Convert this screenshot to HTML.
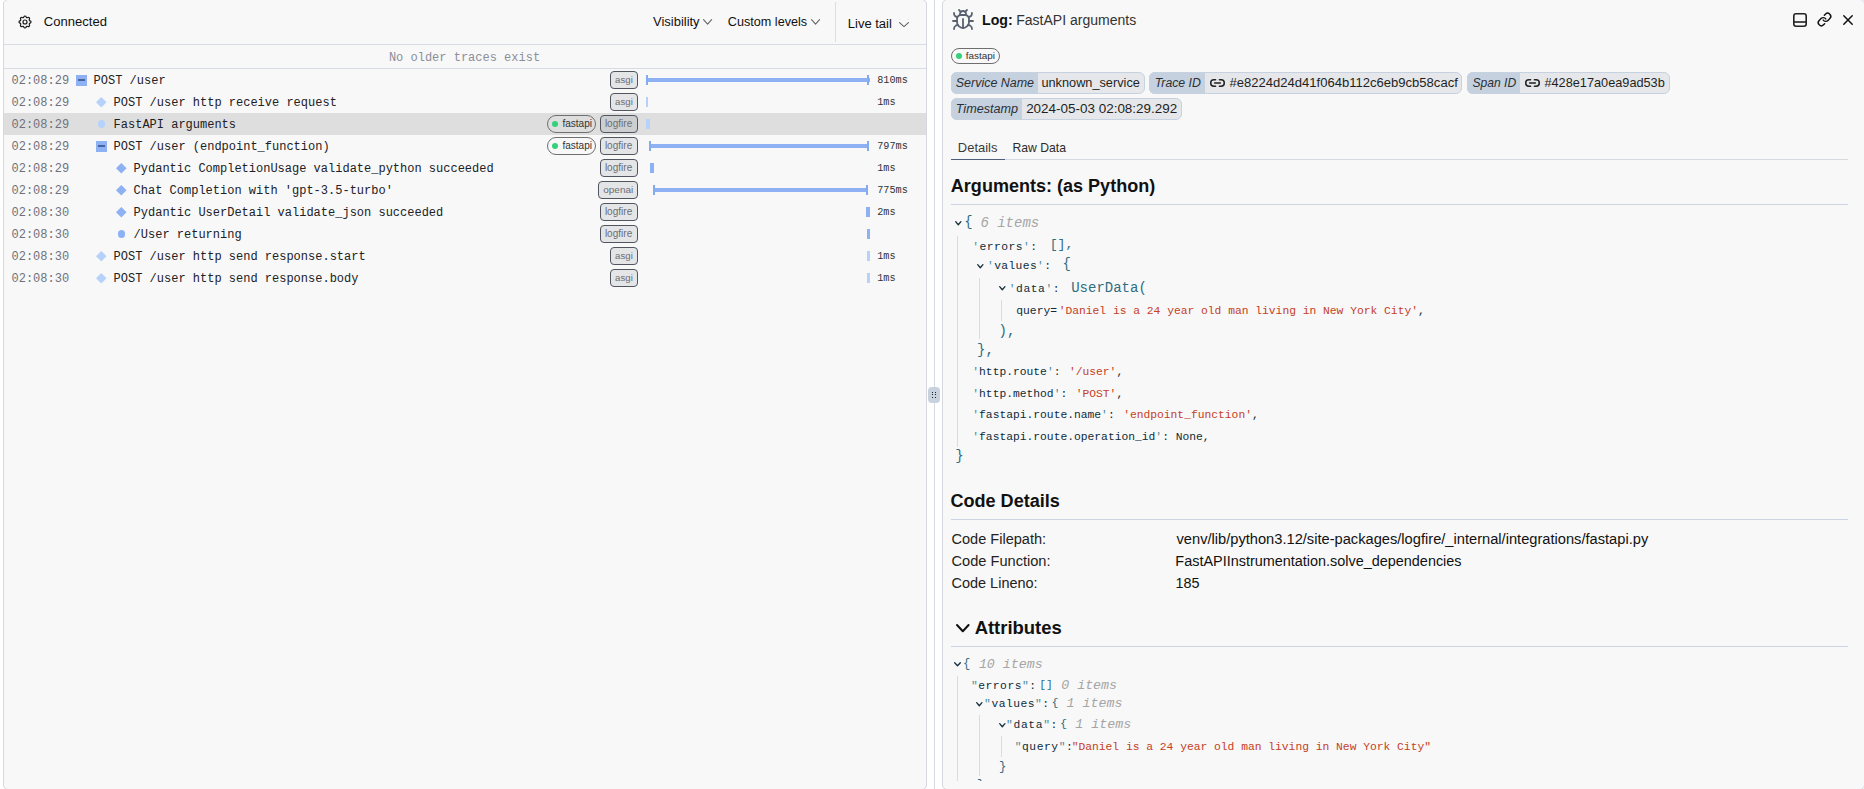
<!DOCTYPE html>
<html><head><meta charset="utf-8"><title>Logfire</title>
<style>
html,body{margin:0;padding:0;width:1864px;height:789px;overflow:hidden;background:#ffffff;}
.t{position:absolute;white-space:pre;}
.b{position:absolute;box-sizing:border-box;}
svg.b{overflow:visible;}
</style></head><body>
<div class="b" style="left:3px;top:-1px;width:924px;height:791px;background:#f8f8f8;border:1px solid #d5d8df;border-radius:5px"></div>
<div class="b" style="left:942px;top:-1px;width:923px;height:791px;background:#f8f8f8;border:1px solid #d5d8df;border-radius:5px"></div>
<div class="b" style="left:934px;top:0px;width:1px;height:789px;background:#d6d9e0"></div>
<div class="b" style="left:928px;top:387px;width:12px;height:16px;background:#c7d2de;border-radius:4px"></div>
<div class="b" style="left:932.3px;top:391.6px;width:1.1px;height:1.1px;background:#222"></div>
<div class="b" style="left:932.3px;top:394.4px;width:1.1px;height:1.1px;background:#222"></div>
<div class="b" style="left:932.3px;top:397.2px;width:1.1px;height:1.1px;background:#222"></div>
<div class="b" style="left:935.2px;top:391.6px;width:1.1px;height:1.1px;background:#222"></div>
<div class="b" style="left:935.2px;top:394.4px;width:1.1px;height:1.1px;background:#222"></div>
<div class="b" style="left:935.2px;top:397.2px;width:1.1px;height:1.1px;background:#222"></div>
<svg class="b" style="left:16.5px;top:14.4px;stroke:#1a1a1a;stroke-width:1.8;stroke-linecap:round;stroke-linejoin:round" width="16" height="16" viewBox="0 0 24 24" fill="none"><path d="M10.325 4.317c.426-1.756 2.924-1.756 3.35 0a1.724 1.724 0 002.573 1.066c1.543-.94 3.31.826 2.37 2.37a1.724 1.724 0 001.065 2.572c1.756.426 1.756 2.924 0 3.35a1.724 1.724 0 00-1.066 2.573c.94 1.543-.826 3.31-2.37 2.37a1.724 1.724 0 00-2.572 1.065c-.426 1.756-2.924 1.756-3.35 0a1.724 1.724 0 00-2.573-1.066c-1.543.94-3.310-.826-2.370-2.370a1.724 1.724 0 00-1.065-2.572c-1.756-.426-1.756-2.924 0-3.350a1.724 1.724 0 001.066-2.573c-.94-1.543.826-3.310 2.370-2.370.996.608 2.296.07 2.572-1.065z"/><path d="M15 12a3 3 0 11-6 0 3 3 0 016 0z"/></svg>
<div class="t" style="left:43.85px;top:15.00px;font:normal normal 13.06px/13.06px 'Liberation Sans',sans-serif;color:#111;">Connected</div>
<div class="t" style="left:653.00px;top:16.00px;font:normal normal 12.97px/12.97px 'Liberation Sans',sans-serif;color:#111;">Visibility</div>
<svg class="b" style="left:703.4px;top:19.1px;" width="9.2" height="5.6" viewBox="0 0 9.2 5.6" fill="none"><polyline points="0.55,0.55 4.60,5.05 8.65,0.55" stroke="#666" stroke-width="1.1" stroke-linecap="round" stroke-linejoin="round"/></svg>
<div class="t" style="left:727.87px;top:16.00px;font:normal normal 12.63px/12.63px 'Liberation Sans',sans-serif;color:#111;">Custom levels</div>
<svg class="b" style="left:810.7px;top:19.1px;" width="9.1" height="5.6" viewBox="0 0 9.1 5.6" fill="none"><polyline points="0.55,0.55 4.55,5.05 8.55,0.55" stroke="#666" stroke-width="1.1" stroke-linecap="round" stroke-linejoin="round"/></svg>
<div class="b" style="left:835px;top:2px;width:1px;height:40px;background:#dcdee5"></div>
<div class="t" style="left:847.76px;top:17.00px;font:normal normal 13.02px/13.02px 'Liberation Sans',sans-serif;color:#111;">Live tail</div>
<svg class="b" style="left:899px;top:22.1px;" width="10" height="5.1" viewBox="0 0 10 5.1" fill="none"><polyline points="0.55,0.55 5.00,4.55 9.45,0.55" stroke="#666" stroke-width="1.1" stroke-linecap="round" stroke-linejoin="round"/></svg>
<div class="b" style="left:4px;top:44px;width:922px;height:1px;background:#d7dce3"></div>
<div class="t" style="left:388.90px;top:52.00px;font:normal 12px/12px 'Liberation Mono',monospace;color:#8b8e9b;">No older traces exist</div>
<div class="b" style="left:4px;top:68px;width:922px;height:1px;background:#d7dce3"></div>
<div class="t" style="left:11.50px;top:75.00px;font:normal 12px/12px 'Liberation Mono',monospace;color:#6f727c;">02:08:29</div>
<div class="b" style="left:75.75px;top:74.5px;width:11.5px;height:11px;background:#8db1f3"></div>
<div class="b" style="left:78.2px;top:79px;width:6.6px;height:2px;background:#46649e"></div>
<div class="t" style="left:93.60px;top:75.00px;font:normal 12px/12px 'Liberation Mono',monospace;color:#202124;">POST /user</div>
<div class="b" style="left:609.8px;top:71.2px;width:28px;height:17.6px;background:rgba(60,70,90,0.1);border:1px solid #50555e;border-radius:4px"></div>
<div class="t" style="left:615.11px;top:75.00px;font:normal normal 9.64px/9.64px 'Liberation Sans',sans-serif;color:#6b6e76;">asgi</div>
<div class="b" style="left:646px;top:78px;width:224px;height:4px;background:#8db1f3"></div>
<div class="b" style="left:646px;top:75px;width:2px;height:10px;background:#84aaf0"></div>
<div class="b" style="left:867px;top:75px;width:2px;height:10px;background:#84aaf0"></div>
<div class="t" style="left:877.20px;top:76.00px;font:normal 10.2px/10.2px 'Liberation Mono',monospace;color:#333;">810ms</div>
<div class="t" style="left:11.50px;top:97.00px;font:normal 12px/12px 'Liberation Mono',monospace;color:#6f727c;">02:08:29</div>
<svg class="b" style="left:96.2px;top:96.7px;" width="10.6" height="10.6" viewBox="0 0 10.6 10.6" fill="none"><polygon points="5.3,0 10.6,5.3 5.3,10.6 0,5.3" fill="#b6d2fb"/></svg>
<div class="t" style="left:113.60px;top:97.00px;font:normal 12px/12px 'Liberation Mono',monospace;color:#202124;">POST /user http receive request</div>
<div class="b" style="left:609.8px;top:93.2px;width:28px;height:17.6px;background:rgba(60,70,90,0.1);border:1px solid #50555e;border-radius:4px"></div>
<div class="t" style="left:615.11px;top:97.00px;font:normal normal 9.64px/9.64px 'Liberation Sans',sans-serif;color:#6b6e76;">asgi</div>
<div class="b" style="left:646px;top:97px;width:2px;height:10px;background:#b6d2fb"></div>
<div class="t" style="left:877.20px;top:98.00px;font:normal 10.2px/10.2px 'Liberation Mono',monospace;color:#333;">1ms</div>
<div class="b" style="left:4px;top:113px;width:922px;height:22px;background:#dedede"></div>
<div class="t" style="left:11.50px;top:119.00px;font:normal 12px/12px 'Liberation Mono',monospace;color:#6f727c;">02:08:29</div>
<div class="b" style="left:97.7px;top:120.2px;width:7.6px;height:7.6px;background:#b6d2fb;border-radius:50%"></div>
<div class="t" style="left:113.60px;top:119.00px;font:normal 12px/12px 'Liberation Mono',monospace;color:#202124;">FastAPI arguments</div>
<div class="b" style="left:600.0999999999999px;top:115.2px;width:37.7px;height:17.6px;background:rgba(60,70,90,0.1);border:1px solid #50555e;border-radius:4px"></div>
<div class="t" style="left:604.90px;top:119.00px;font:normal normal 10.05px/10.05px 'Liberation Sans',sans-serif;color:#6b6e76;">logfire</div>
<div class="b" style="left:547.2999999999998px;top:115.1px;width:48.6px;height:17.5px;border:1px solid #6f6f6f;border-radius:9px"></div>
<div class="b" style="left:552.0999999999998px;top:120.8px;width:6.3px;height:6.3px;background:#33d17a;border-radius:50%"></div>
<div class="t" style="left:562.40px;top:119.00px;font:normal normal 10.06px/10.06px 'Liberation Sans',sans-serif;color:#333;">fastapi</div>
<div class="b" style="left:646px;top:119px;width:4px;height:10px;background:#b6d2fb"></div>
<div class="t" style="left:11.50px;top:141.00px;font:normal 12px/12px 'Liberation Mono',monospace;color:#6f727c;">02:08:29</div>
<div class="b" style="left:95.75px;top:140.5px;width:11.5px;height:11px;background:#8db1f3"></div>
<div class="b" style="left:98.2px;top:145px;width:6.6px;height:2px;background:#46649e"></div>
<div class="t" style="left:113.60px;top:141.00px;font:normal 12px/12px 'Liberation Mono',monospace;color:#202124;">POST /user (endpoint_function)</div>
<div class="b" style="left:600.0999999999999px;top:137.2px;width:37.7px;height:17.6px;background:rgba(60,70,90,0.1);border:1px solid #50555e;border-radius:4px"></div>
<div class="t" style="left:604.90px;top:141.00px;font:normal normal 10.05px/10.05px 'Liberation Sans',sans-serif;color:#6b6e76;">logfire</div>
<div class="b" style="left:547.2999999999998px;top:137.1px;width:48.6px;height:17.5px;border:1px solid #6f6f6f;border-radius:9px"></div>
<div class="b" style="left:552.0999999999998px;top:142.8px;width:6.3px;height:6.3px;background:#33d17a;border-radius:50%"></div>
<div class="t" style="left:562.40px;top:141.00px;font:normal normal 10.06px/10.06px 'Liberation Sans',sans-serif;color:#333;">fastapi</div>
<div class="b" style="left:649px;top:144px;width:220px;height:4px;background:#8db1f3"></div>
<div class="b" style="left:649px;top:141px;width:2px;height:10px;background:#84aaf0"></div>
<div class="b" style="left:867px;top:141px;width:2px;height:10px;background:#84aaf0"></div>
<div class="t" style="left:877.20px;top:142.00px;font:normal 10.2px/10.2px 'Liberation Mono',monospace;color:#333;">797ms</div>
<div class="t" style="left:11.50px;top:163.00px;font:normal 12px/12px 'Liberation Mono',monospace;color:#6f727c;">02:08:29</div>
<svg class="b" style="left:116.2px;top:162.7px;" width="10.6" height="10.6" viewBox="0 0 10.6 10.6" fill="none"><polygon points="5.3,0 10.6,5.3 5.3,10.6 0,5.3" fill="#8db1f3"/></svg>
<div class="t" style="left:133.60px;top:163.00px;font:normal 12px/12px 'Liberation Mono',monospace;color:#202124;">Pydantic CompletionUsage validate_python succeeded</div>
<div class="b" style="left:600.0999999999999px;top:159.2px;width:37.7px;height:17.6px;background:rgba(60,70,90,0.1);border:1px solid #50555e;border-radius:4px"></div>
<div class="t" style="left:604.90px;top:163.00px;font:normal normal 10.05px/10.05px 'Liberation Sans',sans-serif;color:#6b6e76;">logfire</div>
<div class="b" style="left:650px;top:163px;width:4px;height:10px;background:#8db1f3"></div>
<div class="t" style="left:877.20px;top:164.00px;font:normal 10.2px/10.2px 'Liberation Mono',monospace;color:#333;">1ms</div>
<div class="t" style="left:11.50px;top:185.00px;font:normal 12px/12px 'Liberation Mono',monospace;color:#6f727c;">02:08:29</div>
<svg class="b" style="left:116.2px;top:184.7px;" width="10.6" height="10.6" viewBox="0 0 10.6 10.6" fill="none"><polygon points="5.3,0 10.6,5.3 5.3,10.6 0,5.3" fill="#8db1f3"/></svg>
<div class="t" style="left:133.60px;top:185.00px;font:normal 12px/12px 'Liberation Mono',monospace;color:#202124;">Chat Completion with &#x27;gpt-3.5-turbo&#x27;</div>
<div class="b" style="left:598.3px;top:181.2px;width:39.5px;height:17.6px;background:rgba(60,70,90,0.1);border:1px solid #50555e;border-radius:4px"></div>
<div class="t" style="left:603.30px;top:185.00px;font:normal normal 9.96px/9.96px 'Liberation Sans',sans-serif;color:#6b6e76;">openai</div>
<div class="b" style="left:653px;top:188px;width:215px;height:4px;background:#8db1f3"></div>
<div class="b" style="left:653px;top:185px;width:2px;height:10px;background:#84aaf0"></div>
<div class="b" style="left:866px;top:185px;width:2px;height:10px;background:#84aaf0"></div>
<div class="t" style="left:877.20px;top:186.00px;font:normal 10.2px/10.2px 'Liberation Mono',monospace;color:#333;">775ms</div>
<div class="t" style="left:11.50px;top:207.00px;font:normal 12px/12px 'Liberation Mono',monospace;color:#6f727c;">02:08:30</div>
<svg class="b" style="left:116.2px;top:206.7px;" width="10.6" height="10.6" viewBox="0 0 10.6 10.6" fill="none"><polygon points="5.3,0 10.6,5.3 5.3,10.6 0,5.3" fill="#8db1f3"/></svg>
<div class="t" style="left:133.60px;top:207.00px;font:normal 12px/12px 'Liberation Mono',monospace;color:#202124;">Pydantic UserDetail validate_json succeeded</div>
<div class="b" style="left:600.0999999999999px;top:203.2px;width:37.7px;height:17.6px;background:rgba(60,70,90,0.1);border:1px solid #50555e;border-radius:4px"></div>
<div class="t" style="left:604.90px;top:207.00px;font:normal normal 10.05px/10.05px 'Liberation Sans',sans-serif;color:#6b6e76;">logfire</div>
<div class="b" style="left:866px;top:207px;width:4px;height:10px;background:#8db1f3"></div>
<div class="t" style="left:877.20px;top:208.00px;font:normal 10.2px/10.2px 'Liberation Mono',monospace;color:#333;">2ms</div>
<div class="t" style="left:11.50px;top:229.00px;font:normal 12px/12px 'Liberation Mono',monospace;color:#6f727c;">02:08:30</div>
<div class="b" style="left:117.7px;top:230.2px;width:7.6px;height:7.6px;background:#8db1f3;border-radius:50%"></div>
<div class="t" style="left:133.60px;top:229.00px;font:normal 12px/12px 'Liberation Mono',monospace;color:#202124;">/User returning</div>
<div class="b" style="left:600.0999999999999px;top:225.2px;width:37.7px;height:17.6px;background:rgba(60,70,90,0.1);border:1px solid #50555e;border-radius:4px"></div>
<div class="t" style="left:604.90px;top:229.00px;font:normal normal 10.05px/10.05px 'Liberation Sans',sans-serif;color:#6b6e76;">logfire</div>
<div class="b" style="left:867px;top:229px;width:3px;height:10px;background:#8db1f3"></div>
<div class="t" style="left:11.50px;top:251.00px;font:normal 12px/12px 'Liberation Mono',monospace;color:#6f727c;">02:08:30</div>
<svg class="b" style="left:96.2px;top:250.7px;" width="10.6" height="10.6" viewBox="0 0 10.6 10.6" fill="none"><polygon points="5.3,0 10.6,5.3 5.3,10.6 0,5.3" fill="#b6d2fb"/></svg>
<div class="t" style="left:113.60px;top:251.00px;font:normal 12px/12px 'Liberation Mono',monospace;color:#202124;">POST /user http send response.start</div>
<div class="b" style="left:609.8px;top:247.2px;width:28px;height:17.6px;background:rgba(60,70,90,0.1);border:1px solid #50555e;border-radius:4px"></div>
<div class="t" style="left:615.11px;top:251.00px;font:normal normal 9.64px/9.64px 'Liberation Sans',sans-serif;color:#6b6e76;">asgi</div>
<div class="b" style="left:867px;top:251px;width:3px;height:10px;background:#b6d2fb"></div>
<div class="t" style="left:877.20px;top:252.00px;font:normal 10.2px/10.2px 'Liberation Mono',monospace;color:#333;">1ms</div>
<div class="t" style="left:11.50px;top:273.00px;font:normal 12px/12px 'Liberation Mono',monospace;color:#6f727c;">02:08:30</div>
<svg class="b" style="left:96.2px;top:272.7px;" width="10.6" height="10.6" viewBox="0 0 10.6 10.6" fill="none"><polygon points="5.3,0 10.6,5.3 5.3,10.6 0,5.3" fill="#b6d2fb"/></svg>
<div class="t" style="left:113.60px;top:273.00px;font:normal 12px/12px 'Liberation Mono',monospace;color:#202124;">POST /user http send response.body</div>
<div class="b" style="left:609.8px;top:269.2px;width:28px;height:17.6px;background:rgba(60,70,90,0.1);border:1px solid #50555e;border-radius:4px"></div>
<div class="t" style="left:615.11px;top:273.00px;font:normal normal 9.64px/9.64px 'Liberation Sans',sans-serif;color:#6b6e76;">asgi</div>
<div class="b" style="left:867px;top:273px;width:3px;height:10px;background:#b6d2fb"></div>
<div class="t" style="left:877.20px;top:274.00px;font:normal 10.2px/10.2px 'Liberation Mono',monospace;color:#333;">1ms</div>
<svg class="b" style="left:951.1px;top:8px;" width="24" height="24" viewBox="0 0 24 24" fill="none"><g stroke="#5a6070" stroke-width="1.8" stroke-linecap="round" stroke-linejoin="round"><path d="m8 2 1.88 1.88"/><path d="M14.12 3.88 16 2"/><path d="M9 7.13v-1a3.003 3.003 0 1 1 6 0v1"/><path d="M12 20c-3.3 0-6-2.7-6-6v-3a4 4 0 0 1 4-4h4a4 4 0 0 1 4 4v3c0 3.3-2.7 6-6 6"/><path d="M12 20v-9"/><path d="M6.53 9C4.6 8.8 3 7.1 3 5"/><path d="M6 13H2"/><path d="M3 21c0-2.1 1.7-3.9 3.8-4"/><path d="M20.97 5c0 2.1-1.6 3.8-3.5 4"/><path d="M22 13h-4"/><path d="M17.2 17c2.1.1 3.8 1.9 3.8 4"/></g></svg>
<div class="t" style="left:982.05px;top:13.00px;font:normal bold 14.16px/14.16px 'Liberation Sans',sans-serif;color:#111;">Log:</div>
<div class="t" style="left:1016.18px;top:13.00px;font:normal normal 14.03px/14.03px 'Liberation Sans',sans-serif;color:#333;">FastAPI arguments</div>
<svg class="b" style="left:1793px;top:13px;" width="14" height="14" viewBox="0 0 14 14" fill="none"><rect x="0.8" y="0.8" width="12.4" height="12.4" rx="2.2" stroke="#222" stroke-width="1.6"/><line x1="0.8" y1="9" x2="13.2" y2="9" stroke="#222" stroke-width="1.6"/></svg>
<svg class="b" style="left:1816.5px;top:12.2px;stroke:#111;stroke-width:2.3;stroke-linecap:round;stroke-linejoin:round" width="15" height="15" viewBox="0 0 24 24" fill="none"><path d="M10 13a5 5 0 0 0 7.54.54l3-3a5 5 0 0 0-7.07-7.07l-1.72 1.71"/><path d="M14 11a5 5 0 0 0-7.54-.54l-3 3a5 5 0 0 0 7.07 7.07l1.71-1.71"/></svg>
<svg class="b" style="left:1843px;top:15px;" width="10" height="10" viewBox="0 0 10 10" fill="none"><path d="M0.8 0.8 9.2 9.2M9.2 0.8 0.8 9.2" stroke="#111" stroke-width="1.5" stroke-linecap="round"/></svg>
<div class="b" style="left:951px;top:47.9px;width:49px;height:15.9px;border:1px solid #6e6e6e;border-radius:8px"></div>
<div class="b" style="left:955.8px;top:52.8px;width:6.4px;height:6.4px;background:#33d17a;border-radius:50%"></div>
<div class="t" style="left:965.70px;top:51.00px;font:normal normal 9.92px/9.92px 'Liberation Sans',sans-serif;color:#333;">fastapi</div>
<div class="b" style="left:950.8px;top:72.1px;width:194.0px;height:21.5px;background:#e6e7ea;border:1px solid #c6d2df;border-radius:6px;overflow:hidden"></div>
<div class="b" style="left:950.8px;top:72.1px;width:86.90000000000009px;height:21.5px;background:#c5d1de;border:1px solid #c6d2df;border-right:none;border-radius:6px 0 0 6px"></div>
<div class="t" style="left:955.75px;top:77.00px;font:italic normal 12.47px/12.47px 'Liberation Sans',sans-serif;color:#2b2f36;">Service Name</div>
<div class="t" style="left:1041.44px;top:77.00px;font:normal normal 12.74px/12.74px 'Liberation Sans',sans-serif;color:#1e1f22;">unknown_service</div>
<div class="b" style="left:1149.3px;top:72.1px;width:312.9000000000001px;height:21.5px;background:#e6e7ea;border:1px solid #c6d2df;border-radius:6px;overflow:hidden"></div>
<div class="b" style="left:1149.3px;top:72.1px;width:55.700000000000045px;height:21.5px;background:#c5d1de;border:1px solid #c6d2df;border-right:none;border-radius:6px 0 0 6px"></div>
<div class="t" style="left:1154.72px;top:77.00px;font:italic normal 12.28px/12.28px 'Liberation Sans',sans-serif;color:#2b2f36;">Trace ID</div>
<svg class="b" style="left:1209.5px;top:78.9px;" width="15" height="8" viewBox="0 0 15 8" fill="none"><path d="M5.6 0.8H3.9a3.2 3.2 0 0 0 0 6.4h1.7M9.4 0.8h1.7a3.2 3.2 0 0 1 0 6.4H9.4M4.6 4h5.8" stroke="#222" stroke-width="1.5" stroke-linecap="round"/></svg>
<div class="t" style="left:1229.50px;top:76.00px;font:normal normal 13.05px/13.05px 'Liberation Sans',sans-serif;color:#1e1f22;">#e8224d24d41f064b112c6eb9cb58cacf</div>
<div class="b" style="left:1467.2px;top:72.1px;width:202.39999999999986px;height:21.5px;background:#e6e7ea;border:1px solid #c6d2df;border-radius:6px;overflow:hidden"></div>
<div class="b" style="left:1467.2px;top:72.1px;width:52.799999999999955px;height:21.5px;background:#c5d1de;border:1px solid #c6d2df;border-right:none;border-radius:6px 0 0 6px"></div>
<div class="t" style="left:1472.46px;top:77.00px;font:italic normal 12.1px/12.1px 'Liberation Sans',sans-serif;color:#2b2f36;">Span ID</div>
<svg class="b" style="left:1524.5px;top:78.9px;" width="15" height="8" viewBox="0 0 15 8" fill="none"><path d="M5.6 0.8H3.9a3.2 3.2 0 0 0 0 6.4h1.7M9.4 0.8h1.7a3.2 3.2 0 0 1 0 6.4H9.4M4.6 4h5.8" stroke="#222" stroke-width="1.5" stroke-linecap="round"/></svg>
<div class="t" style="left:1544.40px;top:77.00px;font:normal normal 12.74px/12.74px 'Liberation Sans',sans-serif;color:#1e1f22;">#428e17a0ea9ad53b</div>
<div class="b" style="left:950.8px;top:98.2px;width:231.70000000000005px;height:21.5px;background:#e6e7ea;border:1px solid #c6d2df;border-radius:6px;overflow:hidden"></div>
<div class="b" style="left:950.8px;top:98.2px;width:71.10000000000002px;height:21.5px;background:#c5d1de;border:1px solid #c6d2df;border-right:none;border-radius:6px 0 0 6px"></div>
<div class="t" style="left:955.79px;top:103.00px;font:italic normal 12.61px/12.61px 'Liberation Sans',sans-serif;color:#2b2f36;">Timestamp</div>
<div class="t" style="left:1026.13px;top:102.00px;font:normal normal 13.46px/13.46px 'Liberation Sans',sans-serif;color:#1e1f22;">2024-05-03 02:08:29.292</div>
<div class="t" style="left:957.86px;top:142.00px;font:normal normal 12.96px/12.96px 'Liberation Sans',sans-serif;color:#3b3b3b;">Details</div>
<div class="t" style="left:1012.53px;top:142.00px;font:normal normal 12.17px/12.17px 'Liberation Sans',sans-serif;color:#2b2b2b;">Raw Data</div>
<div class="b" style="left:951px;top:159px;width:897px;height:1px;background:#d6dbe2"></div>
<div class="b" style="left:951px;top:159px;width:54px;height:1px;background:#4f5e7a"></div>
<div class="t" style="left:950.84px;top:177.00px;font:normal bold 18.05px/18.05px 'Liberation Sans',sans-serif;color:#111;">Arguments: (as Python)</div>
<div class="b" style="left:951px;top:204px;width:897px;height:1px;background:#cbd5e0"></div>
<div class="b" style="left:957px;top:236px;width:1px;height:211px;background:#dcdcdc"></div>
<div class="b" style="left:979px;top:278px;width:1px;height:61px;background:#dcdcdc"></div>
<div class="b" style="left:1001px;top:300px;width:1px;height:21px;background:#dcdcdc"></div>
<svg class="b" style="left:954.6px;top:220.7px;" width="6.6" height="4.4" viewBox="0 0 6.6 4.4" fill="none"><polyline points="0.68,0.68 3.30,3.73 5.93,0.68" stroke="#17323d" stroke-width="1.35" stroke-linecap="round" stroke-linejoin="round"/></svg>
<div class="t" style="left:964.20px;top:215.00px;font:normal 14px/14px 'Liberation Mono',monospace;color:#1d3441;"><span style="color:#2f6d82">{</span></div>
<div class="t" style="left:980.40px;top:216.00px;font:italic 14px/14px 'Liberation Mono',monospace;color:#1d3441;"><span style="color:#a5a5a5">6 items</span></div>
<div class="t" style="left:972.30px;top:242.00px;font:normal 11.3px/11.3px 'Liberation Mono',monospace;color:#0f2c38;letter-spacing:0.46px"><span style="color:#4b8a9b">'</span>errors<span style="color:#4b8a9b">'</span>:</div>
<div class="t" style="left:1049.70px;top:238.00px;font:normal 13.2px/13.2px 'Liberation Mono',monospace;color:#2f6d82;"><span style="color:#2f6d82">[],</span></div>
<svg class="b" style="left:976.7px;top:264.3px;" width="6.6" height="4.4" viewBox="0 0 6.6 4.4" fill="none"><polyline points="0.68,0.68 3.30,3.72 5.93,0.68" stroke="#17323d" stroke-width="1.35" stroke-linecap="round" stroke-linejoin="round"/></svg>
<div class="t" style="left:987.00px;top:261.00px;font:normal 11.3px/11.3px 'Liberation Mono',monospace;color:#0f2c38;letter-spacing:0.375px"><span style="color:#4b8a9b">'</span>values<span style="color:#4b8a9b">'</span>:</div>
<div class="t" style="left:1062.50px;top:257.00px;font:normal 14px/14px 'Liberation Mono',monospace;color:#1d3441;"><span style="color:#2f6d82">{</span></div>
<svg class="b" style="left:998.8px;top:286.2px;" width="6.6" height="4.4" viewBox="0 0 6.6 4.4" fill="none"><polyline points="0.68,0.68 3.30,3.72 5.93,0.68" stroke="#17323d" stroke-width="1.35" stroke-linecap="round" stroke-linejoin="round"/></svg>
<div class="t" style="left:1008.70px;top:284.00px;font:normal 11.3px/11.3px 'Liberation Mono',monospace;color:#0f2c38;letter-spacing:0.57px"><span style="color:#4b8a9b">'</span>data<span style="color:#4b8a9b">'</span>:</div>
<div class="t" style="left:1071.20px;top:281.00px;font:normal 14px/14px 'Liberation Mono',monospace;color:#1d3441;"><span style="color:#2f6d82">UserData(</span></div>
<div class="t" style="left:1016.30px;top:306.00px;font:normal 11.3px/11.3px 'Liberation Mono',monospace;color:#0f2c38;">query=<span style="color:#c4401f;margin-left:1.7px">&#x27;Daniel is a 24 year old man living in New York City&#x27;</span>,</div>
<div class="t" style="left:998.60px;top:324.00px;font:normal 14px/14px 'Liberation Mono',monospace;color:#2f6d82;"><span style="color:#2f6d82">)</span>,</div>
<div class="t" style="left:977.00px;top:343.00px;font:normal 14px/14px 'Liberation Mono',monospace;color:#2f6d82;"><span style="color:#2f6d82">}</span>,</div>
<div class="t" style="left:972.30px;top:367.00px;font:normal 11.3px/11.3px 'Liberation Mono',monospace;color:#0f2c38;"><span style="color:#4b8a9b">'</span>http.route<span style="color:#4b8a9b">'</span>: <span style="color:#c4401f;margin-left:1.7px">&#x27;/user&#x27;</span>,</div>
<div class="t" style="left:972.30px;top:389.00px;font:normal 11.3px/11.3px 'Liberation Mono',monospace;color:#0f2c38;"><span style="color:#4b8a9b">'</span>http.method<span style="color:#4b8a9b">'</span>: <span style="color:#c4401f;margin-left:1.7px">&#x27;POST&#x27;</span>,</div>
<div class="t" style="left:972.30px;top:410.00px;font:normal 11.3px/11.3px 'Liberation Mono',monospace;color:#0f2c38;"><span style="color:#4b8a9b">'</span>fastapi.route.name<span style="color:#4b8a9b">'</span>: <span style="color:#c4401f;margin-left:1.7px">&#x27;endpoint_function&#x27;</span>,</div>
<div class="t" style="left:972.30px;top:432.00px;font:normal 11.3px/11.3px 'Liberation Mono',monospace;color:#0f2c38;"><span style="color:#4b8a9b">'</span>fastapi.route.operation_id<span style="color:#4b8a9b">'</span>: None,</div>
<div class="t" style="left:955.20px;top:449.00px;font:normal 14px/14px 'Liberation Mono',monospace;color:#2f6d82;"><span style="color:#2f6d82">}</span></div>
<div class="t" style="left:950.38px;top:492.00px;font:normal bold 18.09px/18.09px 'Liberation Sans',sans-serif;color:#111;">Code Details</div>
<div class="b" style="left:951px;top:519px;width:897px;height:1px;background:#cbd5e0"></div>
<div class="t" style="left:951.47px;top:532.00px;font:normal normal 14.55px/14.55px 'Liberation Sans',sans-serif;color:#222;">Code Filepath:</div>
<div class="t" style="left:1176.50px;top:532.00px;font:normal normal 14.66px/14.66px 'Liberation Sans',sans-serif;color:#111;">venv/lib/python3.12/site-packages/logfire/_internal/integrations/fastapi.py</div>
<div class="t" style="left:951.47px;top:554.00px;font:normal normal 14.61px/14.61px 'Liberation Sans',sans-serif;color:#222;">Code Function:</div>
<div class="t" style="left:1175.35px;top:554.00px;font:normal normal 14.43px/14.43px 'Liberation Sans',sans-serif;color:#111;">FastAPIInstrumentation.solve_dependencies</div>
<div class="t" style="left:951.48px;top:576.00px;font:normal normal 14.49px/14.49px 'Liberation Sans',sans-serif;color:#222;">Code Lineno:</div>
<div class="t" style="left:1175.49px;top:576.00px;font:normal normal 14.4px/14.4px 'Liberation Sans',sans-serif;color:#111;">185</div>
<svg class="b" style="left:955.8px;top:624px;" width="13.6" height="8.3" viewBox="0 0 13.6 8.3" fill="none"><polyline points="1.00,1.00 6.80,7.30 12.60,1.00" stroke="#111" stroke-width="2" stroke-linecap="round" stroke-linejoin="round"/></svg>
<div class="t" style="left:974.63px;top:619.00px;font:normal bold 18.47px/18.47px 'Liberation Sans',sans-serif;color:#111;">Attributes</div>
<div class="b" style="left:951px;top:646px;width:897px;height:1px;background:#cbd5e0"></div>
<div class="b" style="left:957px;top:676px;width:1px;height:105px;background:#dcdcdc"></div>
<div class="b" style="left:979px;top:715px;width:1px;height:61px;background:#dcdcdc"></div>
<div class="b" style="left:1001px;top:736px;width:1px;height:21px;background:#dcdcdc"></div>
<svg class="b" style="left:954.2px;top:662.3px;" width="7.0" height="4.4" viewBox="0 0 7.0 4.4" fill="none"><polyline points="0.68,0.68 3.50,3.72 6.33,0.68" stroke="#17323d" stroke-width="1.35" stroke-linecap="round" stroke-linejoin="round"/></svg>
<div class="t" style="left:963.10px;top:658.00px;font:normal 12px/12px 'Liberation Mono',monospace;color:#1d3441;"><span style="color:#2f6d82">{</span></div>
<div class="t" style="left:978.90px;top:658.00px;font:italic 13.3px/13.3px 'Liberation Mono',monospace;color:#1d3441;"><span style="color:#a5a5a5">10 items</span></div>
<div class="t" style="left:970.90px;top:681.00px;font:normal 11.3px/11.3px 'Liberation Mono',monospace;color:#0f2c38;letter-spacing:0.52px"><span style="color:#4b8a9b">"</span>errors<span style="color:#4b8a9b">"</span>:</div>
<div class="t" style="left:1039.20px;top:680.00px;font:normal 11.3px/11.3px 'Liberation Mono',monospace;color:#1d3441;"><span style="color:#2f6d82">[]</span></div>
<div class="t" style="left:1061.20px;top:679.00px;font:italic 13.3px/13.3px 'Liberation Mono',monospace;color:#1d3441;"><span style="color:#a5a5a5">0 items</span></div>
<svg class="b" style="left:976.3px;top:702.3px;" width="6.6" height="4.4" viewBox="0 0 6.6 4.4" fill="none"><polyline points="0.68,0.68 3.30,3.72 5.93,0.68" stroke="#17323d" stroke-width="1.35" stroke-linecap="round" stroke-linejoin="round"/></svg>
<div class="t" style="left:984.10px;top:699.00px;font:normal 11.3px/11.3px 'Liberation Mono',monospace;color:#0f2c38;letter-spacing:0.49px"><span style="color:#4b8a9b">"</span>values<span style="color:#4b8a9b">"</span>:</div>
<div class="t" style="left:1051.50px;top:698.00px;font:normal 11.8px/11.8px 'Liberation Mono',monospace;color:#1d3441;"><span style="color:#2f6d82">{</span></div>
<div class="t" style="left:1066.50px;top:697.00px;font:italic 13.3px/13.3px 'Liberation Mono',monospace;color:#1d3441;"><span style="color:#a5a5a5">1 items</span></div>
<svg class="b" style="left:998.7px;top:723.3px;" width="6.6" height="4.4" viewBox="0 0 6.6 4.4" fill="none"><polyline points="0.68,0.68 3.30,3.72 5.93,0.68" stroke="#17323d" stroke-width="1.35" stroke-linecap="round" stroke-linejoin="round"/></svg>
<div class="t" style="left:1006.10px;top:720.00px;font:normal 11.3px/11.3px 'Liberation Mono',monospace;color:#0f2c38;letter-spacing:0.63px"><span style="color:#4b8a9b">"</span>data<span style="color:#4b8a9b">"</span>:</div>
<div class="t" style="left:1059.90px;top:719.00px;font:normal 11.8px/11.8px 'Liberation Mono',monospace;color:#1d3441;"><span style="color:#2f6d82">{</span></div>
<div class="t" style="left:1075.30px;top:718.00px;font:italic 13.3px/13.3px 'Liberation Mono',monospace;color:#1d3441;"><span style="color:#a5a5a5">1 items</span></div>
<div class="t" style="left:1014.70px;top:742.00px;font:normal 11.3px/11.3px 'Liberation Mono',monospace;color:#0f2c38;letter-spacing:0.54px"><span style="color:#4b8a9b">"</span>query<span style="color:#4b8a9b">"</span>:</div>
<div class="t" style="left:1071.70px;top:742.00px;font:normal 11.3px/11.3px 'Liberation Mono',monospace;color:#1d3441;"><span style="color:#c4401f">&quot;Daniel is a 24 year old man living in New York City&quot;</span></div>
<div class="t" style="left:999.00px;top:761.00px;font:normal 12.2px/12.2px 'Liberation Mono',monospace;color:#1d3441;"><span style="color:#2f6d82">}</span></div>
<div class="t" style="left:977.00px;top:779.00px;font:normal 12.2px/12.2px 'Liberation Mono',monospace;color:#2f6d82;"><span style="color:#2f6d82">}</span>,</div>
<div class="b" style="left:947px;top:781px;width:913px;height:8px;background:#f8f8f8"></div>
</body></html>
